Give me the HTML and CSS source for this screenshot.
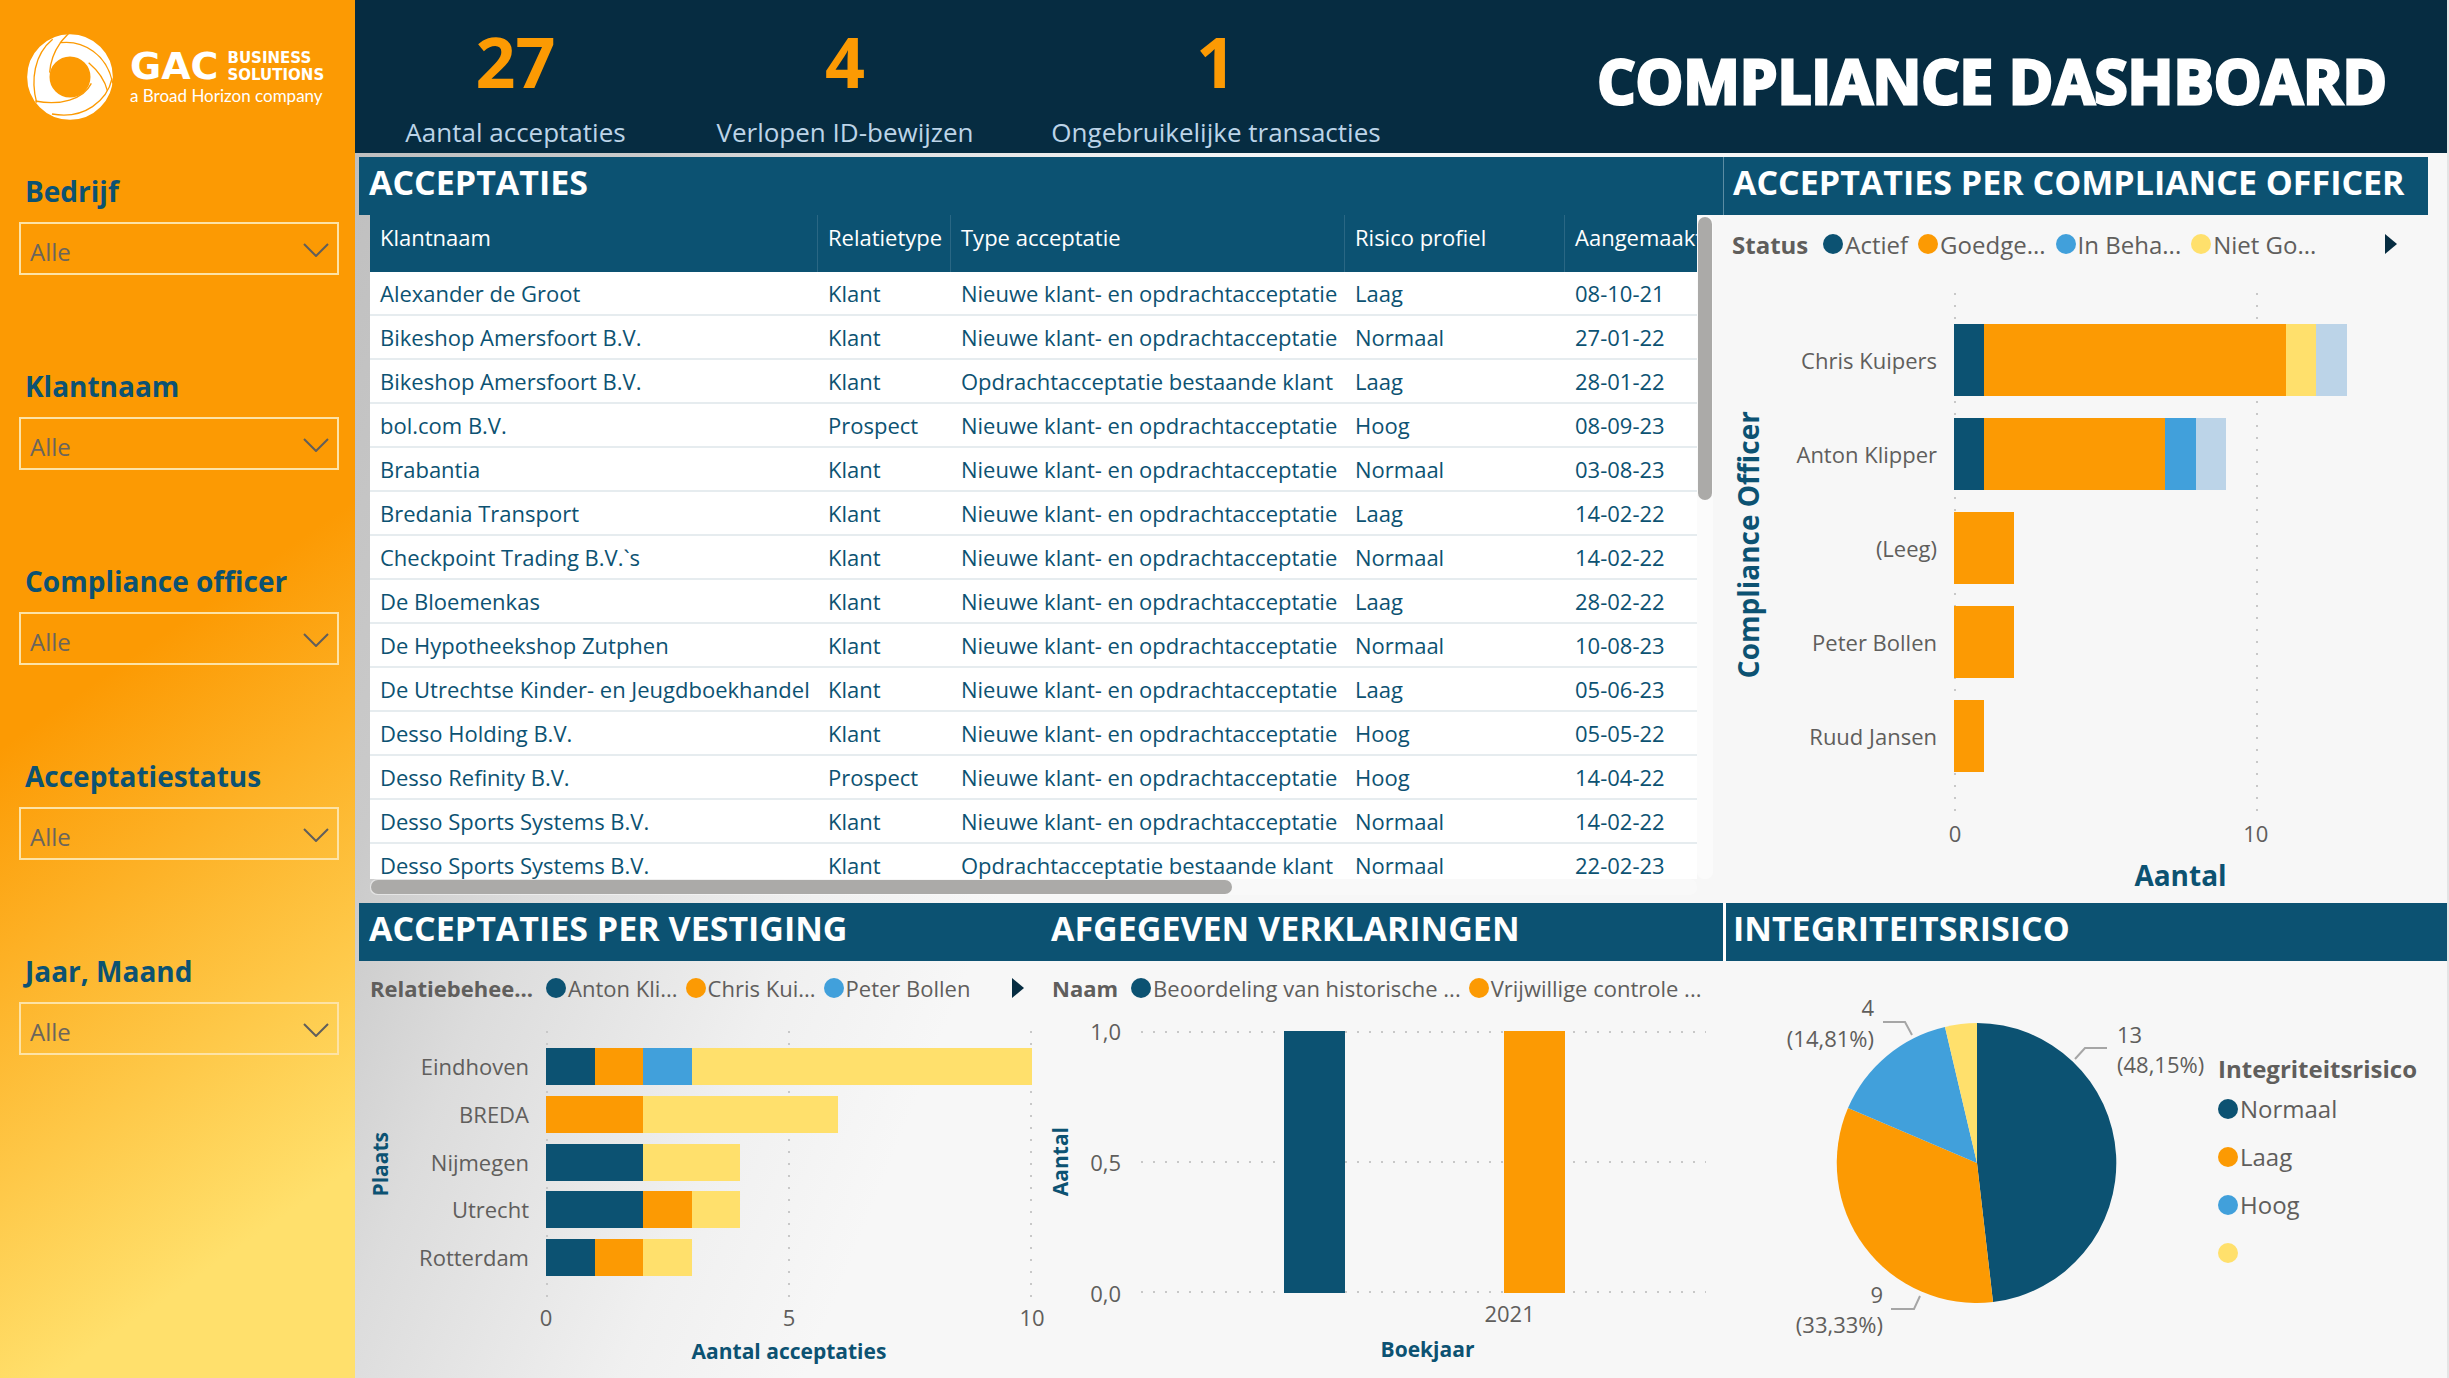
FILE: index.html
```html
<!DOCTYPE html>
<html lang="nl">
<head>
<meta charset="utf-8">
<title>Compliance dashboard</title>
<link rel="stylesheet" href="styles.css">
</head>
<body>
<div class="app">
  <aside class="sidebar">
    <div class="brand">
      <svg class="brand-mark" viewBox="51 42 258 258" aria-hidden="true">
        <circle cx="180" cy="171" r="95" fill="none" stroke="#fff" stroke-width="67"/>
        <g fill="none" stroke="#fc9a03" stroke-width="4">
          <path d="M176 40C164 54 154 62 150 70C130 98 121 128 119 158"/>
          <path d="M128 58C72 104 62 180 80 248"/>
          <path d="M152 68C220 60 292 104 308 190"/>
          <path d="M236 128C262 150 284 178 292 212"/>
          <path d="M76 243C150 258 220 238 244 190"/>
          <path d="M306 176C292 240 224 300 126 282"/>
        </g>
      </svg>
      <div class="brand-text">
        <div class="brand-top"><span class="brand-gac">GAC</span><span class="brand-sub">BUSINESS<br>SOLUTIONS</span></div>
        <div class="brand-tag">a Broad Horizon company</div>
      </div>
    </div>
    <div class="filter"><label for="f1">Bedrijf</label><div class="pick"><select id="f1"><option>Alle</option></select><svg viewBox="0 0 26 14" aria-hidden="true"><path d="M1 1l12 12L25 1"/></svg></div></div>
    <div class="filter"><label for="f2">Klantnaam</label><div class="pick"><select id="f2"><option>Alle</option></select><svg viewBox="0 0 26 14" aria-hidden="true"><path d="M1 1l12 12L25 1"/></svg></div></div>
    <div class="filter"><label for="f3">Compliance officer</label><div class="pick"><select id="f3"><option>Alle</option></select><svg viewBox="0 0 26 14" aria-hidden="true"><path d="M1 1l12 12L25 1"/></svg></div></div>
    <div class="filter"><label for="f4">Acceptatiestatus</label><div class="pick"><select id="f4"><option>Alle</option></select><svg viewBox="0 0 26 14" aria-hidden="true"><path d="M1 1l12 12L25 1"/></svg></div></div>
    <div class="filter"><label for="f5">Jaar, Maand</label><div class="pick"><select id="f5"><option>Alle</option></select><svg viewBox="0 0 26 14" aria-hidden="true"><path d="M1 1l12 12L25 1"/></svg></div></div>
  </aside>

  <main class="main">
    <header class="header">
      <div class="kpis">
        <div class="kpi"><strong>27</strong><span>Aantal acceptaties</span></div>
        <div class="kpi"><strong>4</strong><span>Verlopen ID-bewijzen</span></div>
        <div class="kpi"><strong>1</strong><span>Ongebruikelijke transacties</span></div>
      </div>
      <h1>COMPLIANCE DASHBOARD</h1>
    </header>

    <div class="row">
      <section>
        <h2>ACCEPTATIES</h2>
        <div class="grid-box">
          <div class="table-view">
            <table>
              <colgroup><col class="c-name"><col class="c-rel"><col class="c-type"><col class="c-risk"><col class="c-date"></colgroup>
              <thead><tr><th>Klantnaam</th><th>Relatietype</th><th>Type acceptatie</th><th>Risico profiel</th><th>Aangemaakt</th></tr></thead>
              <tbody>
                <tr><td>Alexander de Groot</td><td>Klant</td><td>Nieuwe klant- en opdrachtacceptatie</td><td>Laag</td><td>08-10-21</td></tr>
                <tr><td>Bikeshop Amersfoort B.V.</td><td>Klant</td><td>Nieuwe klant- en opdrachtacceptatie</td><td>Normaal</td><td>27-01-22</td></tr>
                <tr><td>Bikeshop Amersfoort B.V.</td><td>Klant</td><td>Opdrachtacceptatie bestaande klant</td><td>Laag</td><td>28-01-22</td></tr>
                <tr><td>bol.com B.V.</td><td>Prospect</td><td>Nieuwe klant- en opdrachtacceptatie</td><td>Hoog</td><td>08-09-23</td></tr>
                <tr><td>Brabantia</td><td>Klant</td><td>Nieuwe klant- en opdrachtacceptatie</td><td>Normaal</td><td>03-08-23</td></tr>
                <tr><td>Bredania Transport</td><td>Klant</td><td>Nieuwe klant- en opdrachtacceptatie</td><td>Laag</td><td>14-02-22</td></tr>
                <tr><td>Checkpoint Trading B.V.`s</td><td>Klant</td><td>Nieuwe klant- en opdrachtacceptatie</td><td>Normaal</td><td>14-02-22</td></tr>
                <tr><td>De Bloemenkas</td><td>Klant</td><td>Nieuwe klant- en opdrachtacceptatie</td><td>Laag</td><td>28-02-22</td></tr>
                <tr><td>De Hypotheekshop Zutphen</td><td>Klant</td><td>Nieuwe klant- en opdrachtacceptatie</td><td>Normaal</td><td>10-08-23</td></tr>
                <tr><td>De Utrechtse Kinder- en Jeugdboekhandel</td><td>Klant</td><td>Nieuwe klant- en opdrachtacceptatie</td><td>Laag</td><td>05-06-23</td></tr>
                <tr><td>Desso Holding B.V.</td><td>Klant</td><td>Nieuwe klant- en opdrachtacceptatie</td><td>Hoog</td><td>05-05-22</td></tr>
                <tr><td>Desso Refinity B.V.</td><td>Prospect</td><td>Nieuwe klant- en opdrachtacceptatie</td><td>Hoog</td><td>14-04-22</td></tr>
                <tr><td>Desso Sports Systems B.V.</td><td>Klant</td><td>Nieuwe klant- en opdrachtacceptatie</td><td>Normaal</td><td>14-02-22</td></tr>
                <tr><td>Desso Sports Systems B.V.</td><td>Klant</td><td>Opdrachtacceptatie bestaande klant</td><td>Normaal</td><td>22-02-23</td></tr>
              </tbody>
            </table>
          </div>
          <div class="bar-v"><div class="thumb"></div></div>
          <div class="bar-h"><div class="thumb"></div></div>
        </div>
      </section>

      <section class="officer">
        <h2>ACCEPTATIES PER COMPLIANCE OFFICER</h2>
        <div class="legend large">
          <b>Status</b>
          <span class="key navy">Actief</span><span class="key orange">Goedge...</span><span class="key blue">In Beha...</span><span class="key yellow">Niet Go...</span>
          <button class="next" aria-label="Volgende"><svg viewBox="0 0 12 20" aria-hidden="true"><path d="M0 0l12 10L0 20z"/></svg></button>
        </div>
        <div class="chart">
          <div class="y-title">Compliance Officer</div>
          <div class="names"><span>Chris Kuipers</span><span>Anton Klipper</span><span>(Leeg)</span><span>Peter Bollen</span><span>Ruud Jansen</span></div>
          <div class="plot">
            <div class="bar"><i class="navy" style="width:6.67%"></i><i class="orange" style="width:66.67%"></i><i class="yellow" style="width:6.67%"></i><i class="pale" style="width:6.67%"></i></div>
            <div class="bar"><i class="navy" style="width:6.67%"></i><i class="orange" style="width:40%"></i><i class="blue" style="width:6.67%"></i><i class="pale" style="width:6.67%"></i></div>
            <div class="bar"><i class="orange" style="width:13.33%"></i></div>
            <div class="bar"><i class="orange" style="width:13.33%"></i></div>
            <div class="bar"><i class="orange" style="width:6.67%"></i></div>
          </div>
          <div class="x-axis"><span>0</span><span>10</span></div>
          <div class="x-title">Aantal</div>
        </div>
      </section>
    </div>

    <div class="row lower">
      <div class="pair">
        <section class="branch">
          <h2>ACCEPTATIES PER VESTIGING</h2>
          <div class="legend">
            <b>Relatiebehee...</b>
            <span class="key navy">Anton Kli...</span><span class="key orange">Chris Kui...</span><span class="key blue">Peter Bollen</span>
            <button class="next" aria-label="Volgende"><svg viewBox="0 0 12 20" aria-hidden="true"><path d="M0 0l12 10L0 20z"/></svg></button>
          </div>
          <div class="chart">
            <div class="y-title">Plaats</div>
            <div class="names"><span>Eindhoven</span><span>BREDA</span><span>Nijmegen</span><span>Utrecht</span><span>Rotterdam</span></div>
            <div class="plot">
              <div class="bar"><i class="navy" style="width:10%"></i><i class="orange" style="width:10%"></i><i class="blue" style="width:10%"></i><i class="yellow" style="width:70%"></i></div>
              <div class="bar"><i class="orange" style="width:20%"></i><i class="yellow" style="width:40%"></i></div>
              <div class="bar"><i class="navy" style="width:20%"></i><i class="yellow" style="width:20%"></i></div>
              <div class="bar"><i class="navy" style="width:20%"></i><i class="orange" style="width:10%"></i><i class="yellow" style="width:10%"></i></div>
              <div class="bar"><i class="navy" style="width:10%"></i><i class="orange" style="width:10%"></i><i class="yellow" style="width:10%"></i></div>
            </div>
            <div class="x-axis"><span>0</span><span>5</span><span>10</span></div>
            <div class="x-title">Aantal acceptaties</div>
          </div>
        </section>
        <section class="issued">
          <h2>AFGEGEVEN VERKLARINGEN</h2>
          <div class="legend">
            <b>Naam</b>
            <span class="key navy">Beoordeling van historische ...</span><span class="key orange">Vrijwillige controle ...</span>
          </div>
          <div class="chart">
            <div class="y-title">Aantal</div>
            <div class="names"><span>1,0</span><span>0,5</span><span>0,0</span></div>
            <div class="plot"><i class="navy"></i><i class="orange"></i></div>
            <div class="x-axis"><span>2021</span></div>
            <div class="x-title">Boekjaar</div>
          </div>
        </section>
      </div>
      <section class="risk">
        <h2>INTEGRITEITSRISICO</h2>
        <div class="pie-box">
          <svg class="pie" viewBox="0 0 420 360" role="img" aria-label="Integriteitsrisico">
            <path fill="#0c5272" d="M191 173V33A140 140 0 0 1 207 312Z"/>
            <path fill="#fc9a03" d="M191 173L207 312A140 140 0 0 1 62 118Z"/>
            <path fill="#41a0db" d="M191 173L62 118A140 140 0 0 1 159 37Z"/>
            <path fill="#ffe06c" d="M191 173L159 37A140 140 0 0 1 191 33Z"/>
            <g class="leader"><path d="M321 58H299L289 69"/><path d="M97 32H119L126 45"/><path d="M105 319H128L134 306"/></g>
            <text x="331" y="53">13</text><text x="331" y="83">(48,15%)</text>
            <text class="end" x="88" y="26">4</text><text class="end" x="88" y="57">(14,81%)</text>
            <text class="end" x="97" y="313">9</text><text class="end" x="97" y="343">(33,33%)</text>
          </svg>
          <div class="pie-legend">
            <b>Integriteitsrisico</b>
            <span class="key navy">Normaal</span><span class="key orange">Laag</span><span class="key blue">Hoog</span><span class="key yellow"></span>
          </div>
        </div>
      </section>
    </div>
  </main>
</div>
</body>
</html>
```

FILE: styles.css
```css
* { box-sizing: border-box; }

:root {
  --navy: #0c5272;
  --orange: #fc9a03;
  --blue: #41a0db;
  --yellow: #ffe06c;
  --pale: #bcd4e8;
  --grey: #605e5c;
  --dot: #c8c8c8;
}

body {
  margin: 0;
  background: #e4e4e4;
  font-family: "Open Sans", "Noto Sans", sans-serif;
  font-size: 22px;
  color: var(--grey);
}

.app {
  display: grid;
  grid-template-columns: 355px minmax(0, 1fr);
  min-height: 100vh;
}

/* Sidebar */
.sidebar {
  padding: 34px 16px 0 19px;
  background: linear-gradient(145deg, #fc9a03 46%, #ffe06c 87%);
}

.brand {
  display: flex;
  gap: 17px;
  height: 136px;
  padding-left: 8px;
  color: #fff;
}

.brand-mark { width: 86px; height: 86px; flex: none; }
.brand-text { padding-top: 12px; white-space: nowrap; }
.brand-top { display: flex; gap: 9px; font-family: "DejaVu Sans", sans-serif; font-weight: 700; }
.brand-gac { font-size: 38px; line-height: 40px; }
.brand-sub { padding-top: 4px; font-size: 15px; line-height: 17px; }
.brand-tag { font-family: Lato, sans-serif; font-size: 17px; line-height: 20px; }

.filter { height: 195px; }
.filter label {
  display: block;
  height: 52px;
  padding-left: 6px;
  font-size: 28px;
  font-weight: 700;
  line-height: 42px;
  color: var(--navy);
}

.pick { display: grid; align-items: center; }
.pick > * { grid-area: 1 / 1; }
.pick select {
  width: 100%;
  height: 53px;
  padding: 6px 9px 0;
  border: 2px solid #fde3a6;
  border-radius: 0;
  background: transparent;
  appearance: none;
  font: inherit;
  font-size: 24px;
  color: #6b655c;
}
.pick svg {
  justify-self: end;
  width: 26px;
  height: 14px;
  margin-right: 10px;
  margin-top: 3px;
  fill: none;
  stroke: #605e5c;
  stroke-width: 2;
  pointer-events: none;
}

/* Main area */
.main {
  border-right: 2px solid #e4e4e4;
  background: linear-gradient(112deg, #bdbdbd 0%, #cacaca 13%, #dcdcdc 20%, #f0f0f0 31%, #f7f7f7 38%);
}

.header {
  display: flex;
  justify-content: space-between;
  height: 153px;
  padding-right: 60px;
  background: #062c41;
  white-space: nowrap;
}
.kpis { display: grid; grid-template-columns: 321px 338px 404px; }
.kpi { display: flex; flex-direction: column; align-items: center; }
.kpi strong { padding-top: 16px; font-size: 70px; line-height: 90px; color: var(--orange); }
.kpi span { font-size: 26px; line-height: 52px; color: var(--pale); }

h1 {
  margin: 0;
  font-size: 60px;
  line-height: 162px;
  color: #fff;
  -webkit-text-stroke: 3px #fff;
}

.row {
  display: grid;
  grid-template-columns: minmax(0, 1364fr) minmax(0, 724fr);
  padding: 4px 0 0 4px;
}
.row.lower { padding-top: 0; }
.pair { display: grid; grid-template-columns: minmax(0, 1fr) minmax(0, 1fr); }

h2 {
  margin: 0;
  height: 58px;
  padding-left: 10px;
  background: var(--navy);
  font-size: 34px;
  line-height: 50px;
  color: #fff;
  white-space: nowrap;
}
.officer h2 { margin-right: 19px; padding-left: 9px; border-left: 1px solid #5b8ca3; }
.risk h2 { padding-left: 7px; border-left: 3px solid #fff; }

/* Table */
.grid-box {
  display: grid;
  grid-template-columns: minmax(0, 1fr) 16px;
  grid-template-rows: 664px 24px;
  padding: 0 10px 0 11px;
}
.table-view { overflow: hidden; background: #fff; }
table { width: 1376px; table-layout: fixed; border-spacing: 0; }
.c-name { width: 448px; }
.c-rel { width: 133px; }
.c-type { width: 394px; }
.c-risk { width: 220px; }
.c-date { width: 181px; }
th, td { padding: 0 0 0 10px; text-align: left; white-space: nowrap; }
th {
  height: 57px;
  padding-bottom: 14px;
  border-right: 1px solid #2a6784;
  background: var(--navy);
  font-weight: 400;
  color: #fff;
}
td { height: 44px; border-bottom: 2px solid #e6ecef; color: var(--navy); }

.thumb { border-radius: 7px; background: #abaaa8; }
.bar-v { padding: 2px 1px; border-radius: 7px; background: #fbfbfb; }
.bar-v .thumb { height: 283px; }
.bar-h { height: 16px; padding: 1px; border-radius: 7px; background: #fbfbfb80; }
.bar-h .thumb { width: 65%; height: 14px; }

/* Legends */
.legend {
  display: flex;
  align-items: center;
  gap: 8px;
  height: 56px;
  padding: 0 17px 2px 11px;
  white-space: nowrap;
}
.legend b { margin-right: 5px; }
.legend.large { gap: 10px; height: 60px; padding-right: 50px; padding-left: 9px; font-size: 24px; }
.key { display: flex; align-items: center; gap: 2px; }
.key::before { content: ""; width: 20px; height: 20px; border-radius: 50%; }
.key.navy::before, i.navy { background: var(--navy); }
.key.orange::before, i.orange { background: var(--orange); }
.key.blue::before, i.blue { background: var(--blue); }
.key.yellow::before, i.yellow { background: var(--yellow); }
i.pale { background: var(--pale); }

.next { margin-left: auto; padding: 0; border: 0; background: none; }
.next svg { display: block; width: 12px; height: 20px; fill: #062c41; }

/* Charts */
.chart { display: grid; }
.names, .plot { display: flex; flex-direction: column; justify-content: space-between; }
.names { align-items: flex-end; white-space: nowrap; }
.bar { display: flex; }
.y-title {
  place-self: center;
  writing-mode: vertical-rl;
  transform: rotate(180deg);
  white-space: nowrap;
}
.y-title, .x-title { font-weight: 700; color: var(--navy); }
.x-axis { grid-column: 3; display: flex; justify-content: space-between; }
.x-axis span { display: flex; justify-content: center; width: 0; }
.x-title { grid-column: 3; text-align: center; }

.officer .chart { grid-template: 540px 36px 52px / 48px 165px minmax(0, 1fr); padding: 0 40px 0 1px; }
.officer .names, .officer .plot { padding: 31px 0 43px; margin-top: 18px; }
.officer .names span { line-height: 72px; }
.officer .bar { height: 72px; }
.officer .plot {
  margin-left: 17px;
  background:
    repeating-linear-gradient(var(--dot) 0 2px, transparent 2px 12px) 0 0 / 2px 100% no-repeat,
    repeating-linear-gradient(var(--dot) 0 2px, transparent 2px 12px) 67% 0 / 2px 100% no-repeat;
}
.officer .x-axis { width: 64%; margin-left: 18px; line-height: 36px; }
.officer .y-title, .officer .x-title { font-size: 28px; }
.officer .x-title { padding-left: 17px; line-height: 48px; }

.branch .chart, .issued .chart { line-height: 40px; }
.branch .y-title, .branch .x-title, .issued .y-title, .issued .x-title { font-size: 21px; line-height: 28px; }
.branch .chart {
  grid-template: 266px 40px 28px / 20px 139px minmax(0, 1fr);
  padding: 14px 9px 13px 11px;
}
.branch .names, .branch .plot { padding: 17px 0 21px; }
.branch .names span { line-height: 37px; }
.branch .bar { height: 37px; }
.branch .plot, .branch .x-axis, .branch .x-title { margin-left: 17px; }
.branch .plot {
  background:
    repeating-linear-gradient(var(--dot) 0 2px, transparent 2px 12px) 0 0 / 2px 100% no-repeat,
    repeating-linear-gradient(var(--dot) 0 2px, transparent 2px 12px) 50% 0 / 2px 100% no-repeat,
    repeating-linear-gradient(var(--dot) 0 2px, transparent 2px 12px) 100% 0 / 2px 100% no-repeat;
}

.issued .chart {
  grid-template: 262px 42px 28px / 20px 51px minmax(0, 1fr);
  padding: 14px 17px 14px 9px;
}
.issued .names span { display: flex; align-items: center; height: 0; }
.issued .plot {
  display: grid;
  grid-template-columns: 143fr 61fr 159fr 61fr 141fr;
  justify-content: stretch;
  background:
    repeating-linear-gradient(90deg, var(--dot) 0 2px, transparent 2px 12px) 0 0 / 100% 2px no-repeat,
    repeating-linear-gradient(90deg, var(--dot) 0 2px, transparent 2px 12px) 0 50% / 100% 2px no-repeat,
    repeating-linear-gradient(90deg, var(--dot) 0 2px, transparent 2px 12px) 0 100% / 100% 2px no-repeat;
}
.issued .plot i { grid-column: 2; grid-row: 1; }
.issued .plot i + i { grid-column: 4; }
.issued .plot, .issued .x-axis, .issued .x-title { margin-left: 20px; }
.issued .x-axis { padding-left: 63%; }
.issued .x-title { padding-left: 8px; }

/* Pie */
.pie-box { display: flex; gap: 12px; padding: 29px 0 0 63px; }
.pie { flex: none; width: 420px; height: 360px; font-size: 22px; }
.pie text { fill: var(--grey); }
.pie .end { text-anchor: end; }
.leader { fill: none; stroke: #a6a6a6; stroke-width: 2; }
.pie-legend { padding-top: 55px; font-size: 24px; line-height: 48px; }
.pie-legend b { display: block; height: 40px; }
.pie-legend .key { height: 48px; }
```
